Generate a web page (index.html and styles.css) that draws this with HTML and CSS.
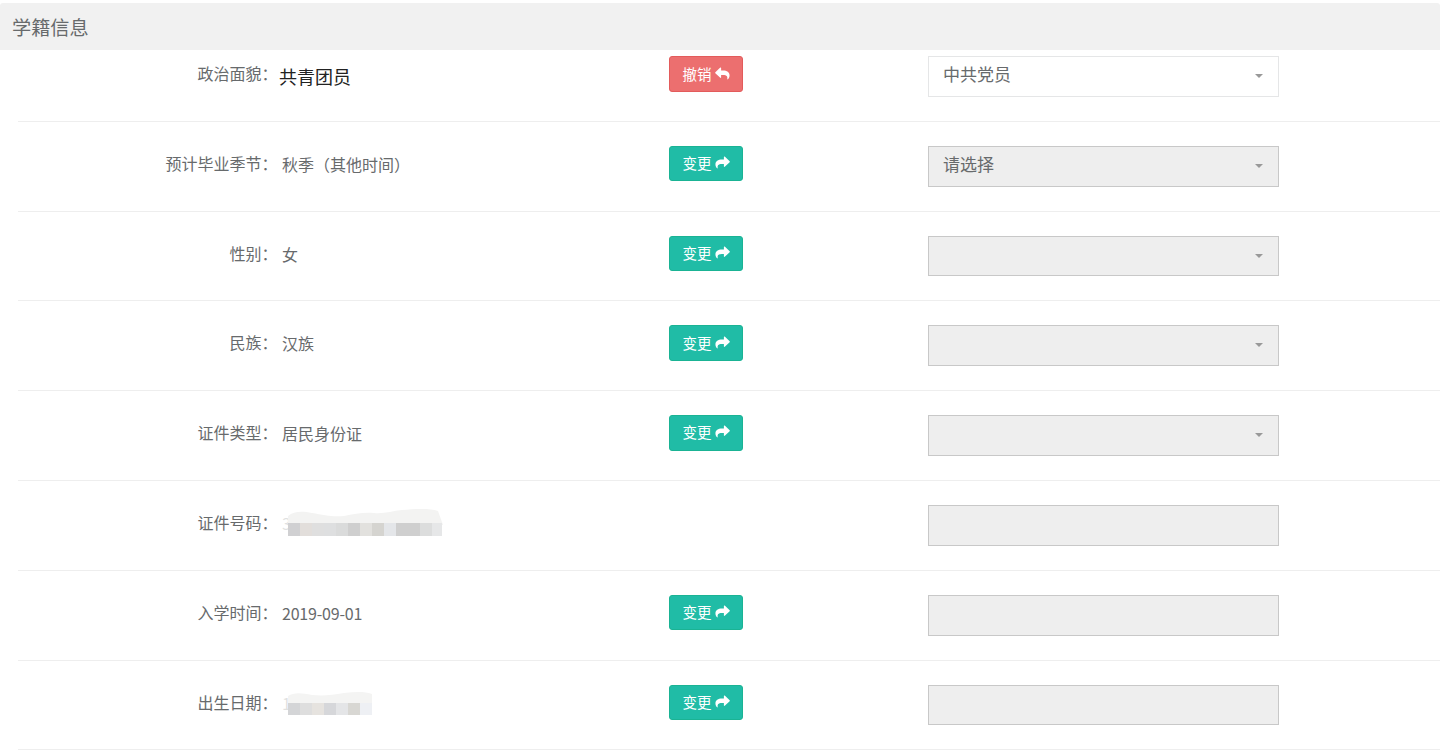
FILE: index.html
```html
<!DOCTYPE html>
<html lang="zh-CN">

<head>
    <meta charset="utf-8">
    <meta name="viewport" content="width=device-width, initial-scale=1.0">
    <title>学籍信息</title>
    <link rel="stylesheet" href="styles.css">
</head>

<body>
    <header class="panel-title">学籍信息</header>

    <section class="liste">
        <div class="rad forste">
            <div class="felt">政治面貌：</div>
            <div class="vaerdi stor">共青团员</div>
            <div class="handling">
                <button class="knap annuller">撤销
                    <svg class="ikon" viewBox="0 0 16 14"><path d="M0.3 5.6 5.6 0.6C6 0.3 6.5 0.5 6.5 1V3.800H8.6C12.8 3.800 15.6 5.400 15.6 9.200 15.6 11 14.7 12.500 13.700 13.300 13.400 13.500 13 13.300 13.100 12.900 13.700 10.200 12.600 8.500 8.700 8.500H6.500V11.300C6.500 11.800 6 12 5.600 11.700L0.300 6.700C0 6.400 0 5.900 0.300 5.600Z"/></svg>
                </button>
            </div>
            <div class="valg pil">中共党员</div>
        </div>

        <div class="rad">
            <div class="felt">预计毕业季节：</div>
            <div class="vaerdi">秋季（其他时间）</div>
            <div class="handling">
                <button class="knap">变更
                    <svg class="ikon" viewBox="0 0 16 14"><path d="M15.700 5.600 10.400 0.600C10 0.300 9.500 0.500 9.500 1V3.800H7.400C3.200 3.800 0.400 5.400 0.400 9.200 0.400 11 1.300 12.500 2.300 13.300 2.600 13.500 3 13.300 2.900 12.900 2.300 10.200 3.400 8.500 7.300 8.500H9.500V11.300C9.500 11.800 10 12 10.400 11.700L15.700 6.700C16 6.400 16 5.900 15.700 5.600Z"/></svg>
                </button>
            </div>
            <div class="valg laast pil">请选择</div>
        </div>

        <div class="rad">
            <div class="felt">性别：</div>
            <div class="vaerdi">女</div>
            <div class="handling">
                <button class="knap">变更
                    <svg class="ikon" viewBox="0 0 16 14"><path d="M15.700 5.600 10.400 0.600C10 0.300 9.500 0.500 9.500 1V3.800H7.400C3.200 3.800 0.400 5.400 0.400 9.200 0.400 11 1.300 12.500 2.300 13.300 2.600 13.500 3 13.300 2.900 12.900 2.300 10.200 3.400 8.500 7.300 8.500H9.500V11.300C9.500 11.800 10 12 10.400 11.700L15.700 6.700C16 6.400 16 5.900 15.700 5.600Z"/></svg>
                </button>
            </div>
            <div class="valg laast pil"></div>
        </div>

        <div class="rad">
            <div class="felt">民族：</div>
            <div class="vaerdi">汉族</div>
            <div class="handling">
                <button class="knap">变更
                    <svg class="ikon" viewBox="0 0 16 14"><path d="M15.700 5.600 10.400 0.600C10 0.300 9.500 0.500 9.500 1V3.800H7.400C3.200 3.800 0.400 5.400 0.400 9.200 0.400 11 1.300 12.500 2.300 13.300 2.600 13.500 3 13.300 2.900 12.900 2.300 10.200 3.400 8.500 7.300 8.500H9.500V11.300C9.500 11.800 10 12 10.400 11.700L15.700 6.700C16 6.400 16 5.900 15.700 5.600Z"/></svg>
                </button>
            </div>
            <div class="valg laast pil"></div>
        </div>

        <div class="rad">
            <div class="felt">证件类型：</div>
            <div class="vaerdi">居民身份证</div>
            <div class="handling">
                <button class="knap">变更
                    <svg class="ikon" viewBox="0 0 16 14"><path d="M15.700 5.600 10.400 0.600C10 0.300 9.500 0.500 9.500 1V3.800H7.400C3.200 3.800 0.400 5.400 0.400 9.200 0.400 11 1.300 12.500 2.300 13.300 2.600 13.500 3 13.300 2.900 12.900 2.300 10.200 3.400 8.500 7.300 8.500H9.500V11.300C9.500 11.800 10 12 10.400 11.700L15.700 6.700C16 6.400 16 5.900 15.700 5.600Z"/></svg>
                </button>
            </div>
            <div class="valg laast pil"></div>
        </div>

        <div class="rad">
            <div class="felt">证件号码：</div>
            <div class="vaerdi">3
                <!-- sloeret felt -->
                <svg class="sloer" width="162" height="30" viewBox="-6 0 162 30">
                    <rect x="-6" width="6" height="30" fill="#fff" opacity="0.8"/>
                    <rect width="156" height="30" fill="#fff"/>
                    <path d="M0 8C6 3 14 3 24 5 36 7 44 9 56 8 66 6 76 4 86 5 96 6 104 3 114 2 126 1 142 0 150 3L155 17H0Z" fill="#f3f3f2"/>
                    <rect x="0" y="15" width="12" height="13" fill="#d0d0d2"/>
                    <rect x="12" y="15" width="12" height="13" fill="#e2dedb"/>
                    <rect x="24" y="15" width="12" height="13" fill="#dfdfdf"/>
                    <rect x="36" y="15" width="12" height="13" fill="#dedfe0"/>
                    <rect x="48" y="15" width="12" height="13" fill="#dadbdb"/>
                    <rect x="60" y="15" width="12" height="13" fill="#cfcfcf"/>
                    <rect x="72" y="15" width="12" height="13" fill="#e2e1de"/>
                    <rect x="84" y="15" width="12" height="13" fill="#d5d4d0"/>
                    <rect x="96" y="15" width="12" height="13" fill="#e4e6e9"/>
                    <rect x="108" y="15" width="24" height="13" fill="#cfcfcf"/>
                    <rect x="132" y="15" width="12" height="13" fill="#dcdddd"/>
                    <rect x="144" y="15" width="10" height="13" fill="#e6e7e8"/>
                </svg>
            </div>
            <div class="handling"></div>
            <div class="valg laast"></div>
        </div>

        <div class="rad">
            <div class="felt">入学时间：</div>
            <div class="vaerdi tal">2019-09-01</div>
            <div class="handling">
                <button class="knap">变更
                    <svg class="ikon" viewBox="0 0 16 14"><path d="M15.700 5.600 10.400 0.600C10 0.300 9.500 0.500 9.500 1V3.800H7.400C3.200 3.800 0.400 5.400 0.400 9.200 0.400 11 1.300 12.500 2.300 13.300 2.600 13.500 3 13.300 2.900 12.900 2.300 10.200 3.400 8.500 7.300 8.500H9.500V11.300C9.500 11.800 10 12 10.400 11.700L15.700 6.700C16 6.400 16 5.900 15.700 5.600Z"/></svg>
                </button>
            </div>
            <div class="valg laast"></div>
        </div>

        <div class="rad">
            <div class="felt">出生日期：</div>
            <div class="vaerdi">1
                <svg class="sloer" width="162" height="30" viewBox="-6 0 162 30">
                    <rect x="-6" width="6" height="30" fill="#fff" opacity="0.8"/>
                    <rect width="156" height="30" fill="#fff"/>
                    <path d="M0 8C6 4 14 5 24 7 36 8 44 7 56 5 66 4 76 3 84 6V15H0Z" fill="#f4f4f3"/>
                    <rect x="0" y="15" width="12" height="12" fill="#d4d5d7"/>
                    <rect x="12" y="15" width="12" height="12" fill="#dedede"/>
                    <rect x="24" y="15" width="12" height="12" fill="#e6e3df"/>
                    <rect x="36" y="15" width="12" height="12" fill="#d6d7da"/>
                    <rect x="48" y="15" width="12" height="12" fill="#e4e5e7"/>
                    <rect x="60" y="15" width="12" height="12" fill="#d8d7d3"/>
                    <rect x="72" y="15" width="12" height="12" fill="#eef0f4"/>
                </svg>
            </div>
            <div class="handling">
                <button class="knap">变更
                    <svg class="ikon" viewBox="0 0 16 14"><path d="M15.700 5.600 10.400 0.600C10 0.300 9.500 0.500 9.500 1V3.800H7.400C3.200 3.800 0.400 5.400 0.400 9.200 0.400 11 1.300 12.500 2.300 13.300 2.600 13.500 3 13.300 2.900 12.900 2.300 10.200 3.400 8.500 7.300 8.500H9.500V11.300C9.500 11.800 10 12 10.400 11.700L15.700 6.700C16 6.400 16 5.900 15.700 5.600Z"/></svg>
                </button>
            </div>
            <div class="valg laast"></div>
        </div>
    </section>
</body>

</html>
```

FILE: styles.css
```css
body {
    margin: 0;
    padding-top: 3px;
    background-color: white;
    color: #676a6c;
    font-family: "Noto Sans CJK SC", "Liberation Sans", sans-serif;
    font-size: 16px;
}

.panel-title {
    height: 47px;
    padding-left: 12px;
    background-color: #f1f1f1;
    border-radius: 3px 3px 0 0;
    font-size: 19.2px;
    line-height: 48px;
}

.liste {
    margin-left: 18px;
}

.rad {
    display: grid;
    grid-template-columns: 261px 390px 259px 351px;
    box-sizing: border-box;
    height: 89.8px;
    padding-top: 24px;
    border-bottom: 1px solid #eeeeee;
}

.rad.forste {
    height: 71.8px;
    padding-top: 6px;
}

.felt {
    padding-right: 1.5px;
    line-height: 35px;
    text-align: right;
}

.vaerdi {
    position: relative;
    padding-left: 3px;
    line-height: 36px;
}

.vaerdi.stor {
    padding-left: 0;
    padding-top: 2px;
    color: #222;
    font-size: 18px;
}

.vaerdi.tal {
    letter-spacing: -0.2px;
}

/* ligger oven paa det skjulte nummer */
.sloer {
    position: absolute;
    left: 3px;
    top: 3px;
}

.knap {
    display: flex;
    align-items: center;
    justify-content: center;
    gap: 3px;
    box-sizing: border-box;
    width: 74px;
    height: 35.500px;
    padding: 0 0 2px;
    background-color: #20bca6;
    border: 1px solid #1ab394;
    border-radius: 3px;
    color: white;
    font-family: inherit;
    font-size: 14.500px;
}

.knap.annuller {
    height: 36px;
    background-color: #ec6f6f;
    border-color: #e35b5b;
}

.ikon {
    width: 15px;
    height: 13px;
    fill: white;
}

.valg {
    position: relative;
    box-sizing: border-box;
    height: 40.800px;
    padding-left: 14px;
    background-color: white;
    border: 1px solid #e5e6e7;
    font-size: 17px;
    line-height: 34px;
}

.valg.laast {
    background-color: #eeeeee;
    border-color: #c8c8c8;
}

.pil::after {
    content: "";
    position: absolute;
    right: 15px;
    top: 17px;
    border-top: 4px solid #999;
    border-left: 4px solid transparent;
    border-right: 4px solid transparent;
}
```
